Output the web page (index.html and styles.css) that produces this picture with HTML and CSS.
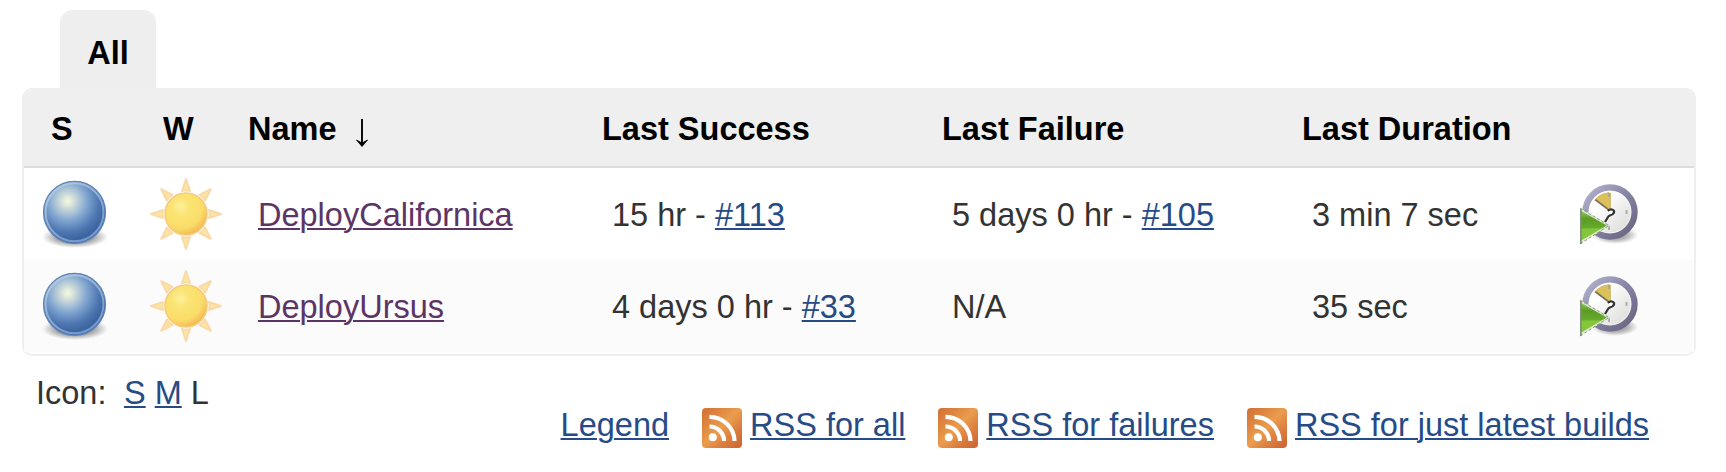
FILE: index.html
```
<!DOCTYPE html>
<html lang="en">
<head>
<meta charset="utf-8">
<title>All</title>
<link rel="stylesheet" href="styles.css">
</head>
<body>
<svg class="defs" width="0" height="0" aria-hidden="true">
  <defs>
    <radialGradient id="ballFill" cx="0.39" cy="0.32" r="0.62">
      <stop offset="0" stop-color="#f6f8e0"/>
      <stop offset="0.12" stop-color="#dde7db"/>
      <stop offset="0.5" stop-color="#82a6d1"/>
      <stop offset="0.8" stop-color="#4f78b3"/>
      <stop offset="1" stop-color="#3d659f"/>
    </radialGradient>
    <linearGradient id="ballRim" x1="0" y1="0" x2="0.6" y2="1">
      <stop offset="0" stop-color="#bfd3e0"/>
      <stop offset="1" stop-color="#7fa3d6"/>
    </linearGradient>
    <radialGradient id="shade">
      <stop offset="0" stop-color="#222" stop-opacity="0.75"/>
      <stop offset="0.6" stop-color="#333" stop-opacity="0.4"/>
      <stop offset="1" stop-color="#444" stop-opacity="0"/>
    </radialGradient>
    <radialGradient id="sunFill" cx="0.37" cy="0.32" r="0.72">
      <stop offset="0" stop-color="#fcf09a"/>
      <stop offset="0.3" stop-color="#fbe474"/>
      <stop offset="0.72" stop-color="#fadd69"/>
      <stop offset="1" stop-color="#f3b650"/>
    </radialGradient>
    <linearGradient id="clockRim" x1="0" y1="0" x2="1" y2="1">
      <stop offset="0" stop-color="#b3b5cf"/>
      <stop offset="0.5" stop-color="#8583a3"/>
      <stop offset="1" stop-color="#67627f"/>
    </linearGradient>
    <linearGradient id="clockFace" x1="0" y1="0" x2="1" y2="1">
      <stop offset="0.3" stop-color="#fff"/>
      <stop offset="1" stop-color="#d4d4d2"/>
    </linearGradient>
    <linearGradient id="play" x1="0" y1="0" x2="0" y2="1">
      <stop offset="0.1" stop-color="#8cc152"/>
      <stop offset="0.3" stop-color="#5b9b26"/>
      <stop offset="0.55" stop-color="#65aa2a"/>
      <stop offset="0.6" stop-color="#83c63b"/>
    </linearGradient>
    <linearGradient id="feed" x1="0" y1="0" x2="1" y2="1">
      <stop offset="0" stop-color="#d26e35"/>
      <stop offset="0.3" stop-color="#e08a42"/>
      <stop offset="0.48" stop-color="#eb9d4d"/>
      <stop offset="0.7" stop-color="#dc8040"/>
      <stop offset="1" stop-color="#cb6233"/>
    </linearGradient>
    <symbol id="ball" viewBox="0 0 80 80">
      <ellipse cx="41" cy="63" rx="33" ry="11" fill="url(#shade)"/>
      <circle cx="40.5" cy="38.3" r="31" fill="url(#ballFill)" stroke="#5f83b8" stroke-width="1.2"/>
      <circle cx="40.5" cy="38.3" r="29" fill="none" stroke="url(#ballRim)" stroke-width="2" opacity="0.85"/>
    </symbol>
    <symbol id="sun" viewBox="0 0 80 80">
      <g fill="#fbe6a0" stroke="#fad9a8" stroke-width="2" stroke-linejoin="round">
        <path id="ray" d="M40 5L44 17Q40 15.500 36 17Z"/>
        <use href="#ray" transform="rotate(45 40 40)"/>
        <use href="#ray" transform="rotate(90 40 40)"/>
        <use href="#ray" transform="rotate(135 40 40)"/>
        <use href="#ray" transform="rotate(180 40 40)"/>
        <use href="#ray" transform="rotate(225 40 40)"/>
        <use href="#ray" transform="rotate(270 40 40)"/>
        <use href="#ray" transform="rotate(315 40 40)"/>
      </g>
      <circle cx="40" cy="40" r="21" fill="url(#sunFill)" stroke="#f7cb7d" stroke-width="1.6"/>
    </symbol>
    <symbol id="clock" viewBox="0 0 60 62">
      <ellipse cx="35" cy="51" rx="23" ry="9" fill="url(#shade)" opacity="0.8"/>
      <circle cx="30" cy="28" r="24.500" fill="url(#clockFace)" stroke="url(#clockRim)" stroke-width="6.400"/>
      <circle cx="30" cy="28" r="21" fill="none" stroke="#fff" stroke-width="1" opacity="0.7"/>
      <path d="M30.500 26V8.500Q21 9 15 15.500Z" fill="#dcc05a"/>
      <path d="M15 15.500L29 26" stroke="#77705a" stroke-width="1.600"/>
      <path d="M15 15.500Q21 9 29 8.500M30.300 9V25" stroke="#cdb76c" stroke-width="1" fill="none"/>
      <path d="M28 27C31 24 35 26 34 28.500S29 31 28 33L25 38" fill="none" stroke="#333" stroke-width="2.200"/>
      <circle cx="30.500" cy="28.500" r="1.700" fill="#fff"/>
      <path d="M29 9V13M46.500 26V30M29 42V46" stroke="#a8a8a4" stroke-width="1.800"/>
      <path d="M-1 24.500L28.500 41.500L-1 59Z" fill="url(#play)" stroke="#dce9ce" stroke-width="2"/>
      <path d="M0 25V60" stroke="#81917a" stroke-width="3.400"/>
      <path d="M0 24L29 41.500L0 60" fill="none" stroke="#64795a" stroke-width="1" stroke-dasharray="3 2" opacity="0.7"/>
    </symbol>
    <symbol id="rss" viewBox="0 0 40 40">
      <rect width="40" height="40" rx="4" fill="url(#feed)"/>
      <circle cx="10.800" cy="29.300" r="4" fill="#fff"/>
      <path d="M7.500 18.500A14.500 14.500 0 0 1 22 33M7.500 8.800A25 25 0 0 1 32.500 33" fill="none" stroke="#fff" stroke-width="4.200"/>
    </symbol>
  </defs>
</svg>

<main class="view">
  <nav class="tabs"><span class="tab">All</span></nav>
  <div class="panel">
    <table class="jobs">
      <colgroup>
        <col class="c-status"><col class="c-weather"><col class="c-name"><col class="c-success"><col class="c-failure"><col class="c-duration"><col>
      </colgroup>
      <thead>
        <tr><th class="h-status">S</th><th class="h-weather">W</th><th>Name<svg class="arrow" viewBox="0 0 14 30"><path d="M7 1V26" stroke="#000" stroke-width="1.900"/><path d="M1.500 22L7 28.500L12.500 22L7 25Z" fill="#000" stroke="#000" stroke-width="0.800"/></svg></th><th>Last Success</th><th>Last Failure</th><th>Last Duration</th><th></th></tr>
      </thead>
      <tbody>
        <tr>
          <td class="icon i-ball"><svg class="ball"><use href="#ball"/></svg></td>
          <td class="icon i-sun"><svg class="sun"><use href="#sun"/></svg></td>
          <td><a class="visited" href="#">DeployCalifornica</a></td>
          <td>15 hr - <a href="#">#113</a></td>
          <td>5 days 0 hr - <a href="#">#105</a></td>
          <td>3 min 7 sec</td>
          <td class="icon i-clock"><svg class="clock"><use href="#clock"/></svg></td>
        </tr>
        <tr>
          <td class="icon i-ball"><svg class="ball"><use href="#ball"/></svg></td>
          <td class="icon i-sun"><svg class="sun"><use href="#sun"/></svg></td>
          <td><a class="visited" href="#">DeployUrsus</a></td>
          <td>4 days 0 hr - <a href="#">#33</a></td>
          <td>N/A</td>
          <td>35 sec</td>
          <td class="icon i-clock"><svg class="clock"><use href="#clock"/></svg></td>
        </tr>
      </tbody>
    </table>
  </div>
  <footer class="footer">
    <div class="sizes"><span class="label">Icon:</span><a href="#">S</a> <a href="#">M</a> L</div>
    <div class="feeds">
      <a href="#">Legend</a>
      <span class="feed"><svg class="rss"><use href="#rss"/></svg><a href="#">RSS for all</a></span>
      <span class="feed"><svg class="rss"><use href="#rss"/></svg><a href="#">RSS for failures</a></span>
      <span class="feed"><svg class="rss"><use href="#rss"/></svg><a href="#">RSS for just latest builds</a></span>
    </div>
  </footer>
</main>
</body>
</html>
```

FILE: styles.css
```
* { box-sizing: border-box; }
body {
  margin: 0;
  background: #fff;
  color: #333;
  font: 32.5px/38px "Liberation Sans", Arial, sans-serif;
  overflow: hidden;
}
svg { display: block; }
.defs { position: absolute; }
a {
  color: #264b86;
  text-decoration: underline;
  text-decoration-thickness: 2px;
  text-underline-offset: 2px;
}
a.visited { color: #5c3566; }
.view { width: 1726px; padding: 10px 30px 0 22px; }
.tabs { display: flex; padding-left: 38px; }
.tab {
  width: 96px;
  height: 78px;
  padding-top: 22px;
  text-align: center;
  font-weight: bold;
  color: #000;
  background: #eee;
  border: 2px solid #f0f0f0;
  border-bottom: 0;
  border-radius: 12px 12px 0 0;
}
.panel {
  height: 268px;
  border: 2px solid #efefef;
  border-radius: 10px;
}
.jobs {
  width: 100%;
  table-layout: fixed;
  border-collapse: separate;
  border-spacing: 0;
}
.c-status { width: 112px; }
.c-weather { width: 104px; }
.c-name { width: 362px; }
.c-success { width: 340px; }
.c-failure { width: 360px; }
.c-duration { width: 269px; }
th {
  height: 78px;
  padding: 2px 0 0;
  text-align: left;
  color: #000;
  background: #efefef;
  border-bottom: 2px solid #ddd;
  white-space: nowrap;
}
th:nth-child(3) { padding-left: 8px; }
th:first-child { border-top-left-radius: 8px; }
th:last-child { border-top-right-radius: 8px; }
.h-status { padding-left: 27px; }
.h-weather { padding-left: 27px; }
.arrow { display: inline-block; width: 14px; height: 30px; margin-left: 18px; vertical-align: -8px; }
td { height: 92px; padding: 2px 0 0 10px; vertical-align: middle; white-space: nowrap; }
td:nth-child(3) { padding-left: 18px; }
tbody tr:nth-child(2) td { background: #fbfbfb; }
td.icon { padding: 0; }
td.i-ball { padding-left: 10px; }
td.i-sun { padding-left: 10px; }
td.i-clock { padding: 2px 0 0 9px; }
.ball, .sun { width: 80px; height: 80px; }
.clock { width: 60px; height: 62px; }
.footer { display: flex; justify-content: space-between; }
.sizes { padding: 18px 0 0 14px; white-space: nowrap; }
.label { margin-right: 17.5px; }
.feeds {
  display: flex;
  align-items: flex-start;
  gap: 33px;
  padding: 50px 47px 0 0;
  white-space: nowrap;
}
.feed { display: flex; gap: 8px; }
.rss { width: 40px; height: 40px; margin-top: 2px; }
```
